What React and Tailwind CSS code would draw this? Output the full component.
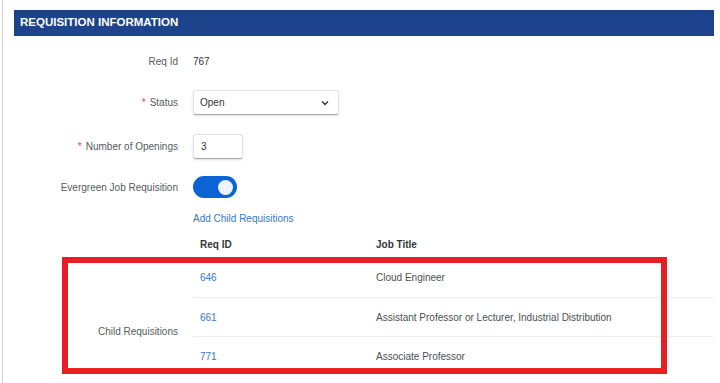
import React from 'react';

/**
 * Requisition information panel with a table of child requisitions.
 * The red frame is an annotation that sits over the table.
 */
const childReqs = [
  { id: '646', title: 'Cloud Engineer' },
  { id: '661', title: 'Assistant Professor or Lecturer, Industrial Distribution' },
  { id: '771', title: 'Associate Professor' },
];

function Label({ required, children }) {
  return (
    <div className="w-[164px] shrink-0 text-right text-[10px] text-[#555b61]">
      {required && <span className="mr-[4px] text-[#e0457b]">*</span>}
      {children}
    </div>
  );
}

export default function App() {
  return (
    <div
      className="relative h-[383px] w-[720px] overflow-hidden bg-white"
      style={{ fontFamily: '"Liberation Sans", Arial, sans-serif' }}
    >
      <div className="ml-[2px] h-full border-l border-[#d4d4d4] pl-[11px] pr-[6px] pt-[10px]">
        {/* Header */}
        <div className="flex h-[26px] items-center bg-[#1c438b] pl-[6px] text-[11.5px] font-bold text-white">
          REQUISITION INFORMATION
        </div>

        {/* Req Id */}
        <div className="mt-[12px] flex h-[26px] items-center gap-[15px]">
          <Label>Req Id</Label>
          <span className="text-[10px] text-[#333]">767</span>
        </div>

        {/* Status */}
        <div className="mt-[16px] flex h-[25px] items-center gap-[15px]">
          <Label required>Status</Label>
          <div className="flex h-[25px] w-[146px] items-center justify-between rounded-[3px] border border-[#e3e3e3] border-b-[#a9a9a9] bg-white px-[6px] text-[10px] text-[#333] shadow-sm">
            <span>Open</span>
            <svg width="8" height="6" viewBox="0 0 8 6" className="mr-[3px]">
              <path d="M1 1.5 L4 4.5 L7 1.5" fill="none" stroke="#333" strokeWidth="1.4" />
            </svg>
          </div>
        </div>

        {/* Number of Openings */}
        <div className="mt-[19px] flex h-[25px] items-center gap-[15px]">
          <Label required>Number of Openings</Label>
          <div className="flex h-[25px] w-[50px] items-center rounded-[3px] border border-[#e3e3e3] border-b-[#a9a9a9] bg-white px-[7px] text-[10px] text-[#333] shadow-sm">
            3
          </div>
        </div>

        {/* Evergreen */}
        <div className="mt-[17px] flex h-[22px] items-center gap-[15px]">
          <Label>Evergreen Job Requisition</Label>
          <div className="flex h-[22px] w-[44px] items-center justify-end rounded-full bg-[#0b63d6] pr-[4px]">
            <div className="h-[15px] w-[15px] rounded-full bg-[#eef4ff]" />
          </div>
        </div>

        {/* Add child link */}
        <div className="mt-[12px] flex h-[16px] items-center gap-[15px]">
          <div className="w-[164px] shrink-0" />
          <span className="text-[10px] text-[#3577d4]">Add Child Requisitions</span>
        </div>

        {/* Table */}
        <div className="mt-[8px] flex gap-[15px]">
          <div className="w-[164px] shrink-0">
            <div className="h-[24px]" />
            <div className="pt-[66px] text-right text-[10px] text-[#555b61]">Child Requisitions</div>
          </div>
          <div className="flex-1 pr-[1px]">
            <div className="grid h-[24px] grid-cols-[176px_1fr] items-center pb-[4px] text-[10px] font-bold text-[#32363a]">
              <div className="pl-[7px]">Req ID</div>
              <div className="pl-[7px]">Job Title</div>
            </div>
            {childReqs.map((req, idx) => (
              <div
                key={req.id}
                className={`grid h-[39px] grid-cols-[176px_1fr] items-center text-[10px] ${
                  idx > 0 ? 'border-t border-[#ececec]' : ''
                }`}
              >
                <div className="pl-[7px] text-[#3577d4]">{req.id}</div>
                <div className="pl-[7px] text-[#4a4f55]">{req.title}</div>
              </div>
            ))}
          </div>
        </div>
      </div>

      {/* Red annotation frame */}
      <div className="pointer-events-none absolute left-[62px] top-[257px] h-[117px] w-[605px] border-[6px] border-[#e41f26]" />
    </div>
  );
}
